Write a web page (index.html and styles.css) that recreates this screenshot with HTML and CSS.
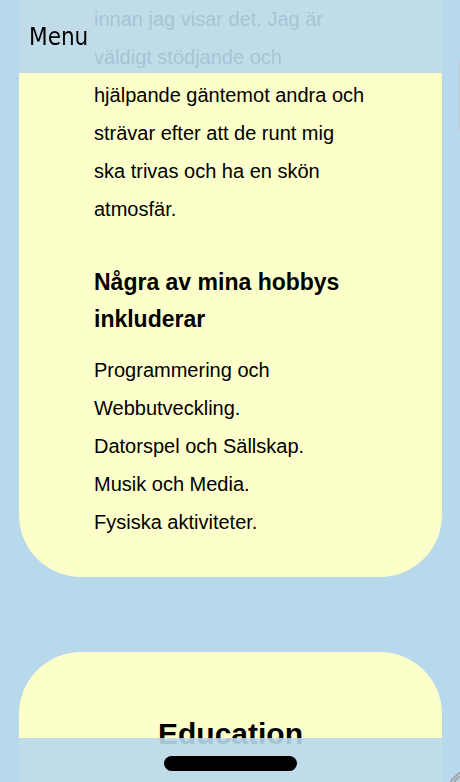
FILE: index.html
```html
<!DOCTYPE html>
<html lang="sv">
<head>
<meta charset="utf-8">
<meta name="viewport" content="width=device-width, initial-scale=1">
<title>Om mig</title>
<link rel="stylesheet" href="styles.css">
</head>
<body>
<header class="topbar"><button class="menu" type="button">Menu</button></header>
<main class="page">
  <section class="card card-about">
    <p class="text">innan jag visar det. Jag är väldigt stödjande och hjälpande gäntemot andra och strävar efter att de runt mig ska trivas och ha en skön atmosfär.</p>
    <h3 class="subtitle">Några av mina hobbys inkluderar</h3>
    <ul class="text hobbies">
      <li>Programmering och Webbutveckling.</li>
      <li>Datorspel och Sällskap.</li>
      <li>Musik och Media.</li>
      <li>Fysiska aktiviteter.</li>
    </ul>
  </section>
  <section class="card card-education">
    <h2 class="title">Education</h2>
  </section>
</main>
<footer class="bottombar">
  <div class="home-indicator"></div>
  <svg class="grip" width="10" height="10" viewBox="0 0 10 10" aria-hidden="true"><path d="M0 10 10 0M4 10 10 4"/></svg>
</footer>
<div class="side-button"></div>
</body>
</html>
```

FILE: styles.css
```css
* { box-sizing: border-box; }

body {
  margin: 0;
  background: #b8d8eb;
  color: #000;
  font-family: "Liberation Sans", Arial, sans-serif;
}

.topbar, .bottombar {
  position: fixed;
  left: 0;
  right: 0;
  z-index: 1;
  display: flex;
  background: rgb(184 216 235 / 90%);
}

.topbar {
  top: 0;
  height: 73px;
  align-items: center;
  padding: 0 29px;
}

.menu {
  padding: 0;
  border: 0;
  background: none;
  color: inherit;
  font: 24px "DejaVu Sans Condensed", "DejaVu Sans", sans-serif;
  font-stretch: condensed;
}

.page {
  display: flex;
  flex-direction: column;
  gap: 75px;
  min-height: 100vh;
  padding: 0 18px 0 19px;
}

.card {
  padding: 0 75px 36px;
  background: #fdffcb;
}

.card-about {
  border-radius: 0 0 62px 62px;
}

.card-education {
  flex: 1;
  padding: 62px 75px 20px;
  border-radius: 62px 62px 0 0;
}

.text {
  margin: 0;
  font-size: 20px;
  line-height: 38px;
}

.subtitle {
  margin: 36px 0 13px;
  font-size: 23px;
  line-height: 37px;
}

.hobbies {
  padding: 0;
  list-style: none;
}

.title {
  margin: 0;
  font-size: 30px;
  line-height: 40px;
  text-align: center;
}

.bottombar {
  bottom: 0;
  height: 44px;
  justify-content: center;
  padding-top: 18px;
}

.home-indicator {
  width: 133px;
  height: 15px;
  border-radius: 8px;
  background: #000;
}

.grip {
  position: absolute;
  right: 0;
  bottom: 0;
  fill: none;
  stroke: #a5a5a5;
  stroke-width: 2;
}

.side-button {
  position: fixed;
  top: 61px;
  right: 0;
  z-index: 2;
  width: 1px;
  height: 68px;
  background: #c4c8d0;
}
```
